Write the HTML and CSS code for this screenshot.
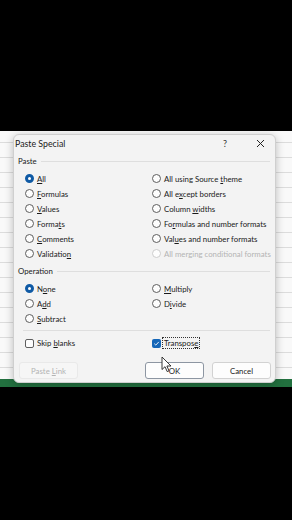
FILE: index.html
```html
<!DOCTYPE html>
<html lang="en">
<head>
    <meta charset="UTF-8">
    <meta name="viewport" content="width=device-width, initial-scale=1.0">
    <title>Paste Special</title>
    <link rel="stylesheet" href="styles.css">
</head>
<body>
    <div class="letterbox-top"></div>

    <div class="screen">
        <div class="sheet"></div>
        <div class="status-strip"></div>

        <div class="dialog">
            <div class="title-bar">
                <span class="title">Paste Special</span>
                <span class="help">?</span>
                <svg class="close" width="9" height="9" viewBox="0 0 9 9">
                    <path d="M1 1 L8 8 M8 1 L1 8" stroke="#222" stroke-width="1"/>
                </svg>
            </div>

            <div class="group-head"><span>Paste</span><i></i></div>
            <div class="options">
                <div class="opt"><span class="radio on"></span><span><u>A</u>ll</span></div>
                <div class="opt"><span class="radio"></span><span>All using Source <u>t</u>heme</span></div>
                <div class="opt"><span class="radio"></span><span><u>F</u>ormulas</span></div>
                <div class="opt"><span class="radio"></span><span>All e<u>x</u>cept borders</span></div>
                <div class="opt"><span class="radio"></span><span><u>V</u>alues</span></div>
                <div class="opt"><span class="radio"></span><span>Column <u>w</u>idths</span></div>
                <div class="opt"><span class="radio"></span><span>Forma<u>t</u>s</span></div>
                <div class="opt"><span class="radio"></span><span>Fo<u>r</u>mulas and number formats</span></div>
                <div class="opt"><span class="radio"></span><span><u>C</u>omments</span></div>
                <div class="opt"><span class="radio"></span><span>Val<u>u</u>es and number formats</span></div>
                <div class="opt"><span class="radio"></span><span>Validatio<u>n</u></span></div>
                <div class="opt disabled"><span class="radio"></span><span>All merging conditional formats</span></div>
            </div>

            <div class="group-head op-head"><span>Operation</span><i></i></div>
            <div class="options">
                <div class="opt"><span class="radio on"></span><span>N<u>o</u>ne</span></div>
                <div class="opt"><span class="radio"></span><span><u>M</u>ultiply</span></div>
                <div class="opt"><span class="radio"></span><span>A<u>d</u>d</span></div>
                <div class="opt"><span class="radio"></span><span>D<u>i</u>vide</span></div>
                <div class="opt"><span class="radio"></span><span><u>S</u>ubtract</span></div>
                <div class="opt"></div>
            </div>

            <div class="separator"></div>

            <div class="options checks">
                <div class="opt"><span class="checkbox"></span><span>Skip <u>b</u>lanks</span></div>
                <div class="opt">
                    <span class="checkbox on">
                        <svg width="9" height="9" viewBox="0 0 9 9"><path d="M2.3 4.7 L3.8 6.1 L6.8 2.9" fill="none" stroke="#fff" stroke-width="0.9"/></svg>
                    </span>
                    <span class="focus">Transpos<u>e</u></span>
                </div>
            </div>

            <div class="buttons">
                <button class="btn disabled">Paste <u>L</u>ink</button>
                <span class="spacer"></span>
                <button class="btn default">OK</button>
                <button class="btn">Cancel</button>
            </div>
        </div>

        <svg class="pointer" width="12" height="17" viewBox="0 0 12 17">
            <path d="M1 1 L1 13.5 L4 10.7 L6.2 15.6 L8 14.8 L5.9 10 L10 10 Z" fill="#fff" stroke="#222" stroke-width="0.9" stroke-linejoin="round"/>
        </svg>
    </div>

    <div class="letterbox-bottom"></div>
</body>
</html>
```

FILE: styles.css
```css
body {
    margin: 0;
    background: #000;
    font-family: Lato, "Noto Sans", sans-serif;
    color: #1a1a1a;
    height: 520px;
    overflow: hidden;
}

.letterbox-top {
    height: 131px;
}

.screen {
    position: relative;
    height: 256px;
    display: flex;
    flex-direction: column;
}

.sheet {
    flex: 1;
    background:
        repeating-linear-gradient(to bottom, transparent 0 11px, #dcdcdc 11px 12px, transparent 12px 15px),
        #f9f9f9;
}

.status-strip {
    height: 8px;
    background: #22703f;
}

.dialog {
    position: absolute;
    left: 13px;
    top: 3px;
    width: 263px;
    height: 249px;
    box-sizing: border-box;
    background: #f3f3f3;
    border: 1px solid #cfcfcf;
    border-radius: 6px;
    box-shadow: 0 2px 8px rgba(0, 0, 0, 0.25);
    padding: 0 4px 0 4px;
}

.title-bar {
    display: flex;
    align-items: center;
    height: 17px;
}

.title {
    font-size: 8.8px;
    flex: 1;
    margin-left: -3px;
}

.help {
    font-size: 9px;
    color: #333;
    margin-right: 29px;
}

.close {
    margin-right: 6px;
}

.group-head {
    display: flex;
    align-items: center;
    height: 14px;
    margin-top: 2px;
    font-size: 7.8px;
}

.group-head i {
    flex: 1;
    height: 1px;
    background: #dedede;
    margin-left: 4px;
    margin-right: 1px;
}

.op-head {
    margin-top: 3px;
}

.options {
    display: grid;
    grid-template-columns: 127px 1fr;
    grid-auto-rows: 15px;
    padding-left: 7px;
    margin-top: 3px;
    font-size: 7.8px;
}

.opt {
    display: flex;
    align-items: center;
    gap: 3px;
    white-space: nowrap;
}

.opt u {
    text-decoration-thickness: 0.6px;
    text-underline-offset: 1px;
}

.radio {
    width: 9px;
    height: 9px;
    box-sizing: border-box;
    border: 1px solid #5e5e5e;
    border-radius: 50%;
    background: #fdfdfd;
    flex: none;
}

.radio.on {
    border: 3px solid #0f5aa5;
    background: #fff;
}

.disabled {
    color: #b4b4b4;
}

.opt.disabled .radio {
    border-color: #cdcdcd;
}

.separator {
    height: 1px;
    background: #dedede;
    margin: 4px 1px 0 5px;
}

.checks {
    grid-auto-rows: 14px;
    margin-top: 5px;
}

.checkbox {
    width: 9px;
    height: 9px;
    box-sizing: border-box;
    border: 1px solid #5e5e5e;
    border-radius: 2px;
    background: #fdfdfd;
    flex: none;
    display: flex;
}

.checkbox.on {
    border: none;
    background: #1466b8;
}

.focus {
    outline: 1px dotted #333;
    padding: 0 1px;
    margin-left: -1px;
}

.buttons {
    display: flex;
    gap: 8px;
    margin-top: 12px;
    padding-left: 1px;
}

.spacer {
    flex: 1;
}

.btn {
    width: 59px;
    height: 17px;
    padding: 0;
    font-family: inherit;
    font-size: 7.8px;
    color: #1a1a1a;
    background: #fdfdfd;
    border: 1px solid #d2d2d2;
    border-radius: 3px;
}

.btn.disabled {
    background: #f6f6f6;
    border-color: #e9e9e9;
    color: #b4b4b4;
}

.btn.default {
    border-color: #8d96a2;
}

.pointer {
    position: absolute;
    left: 161px;
    top: 225px;
}

.letterbox-bottom {
    height: 133px;
}
```
